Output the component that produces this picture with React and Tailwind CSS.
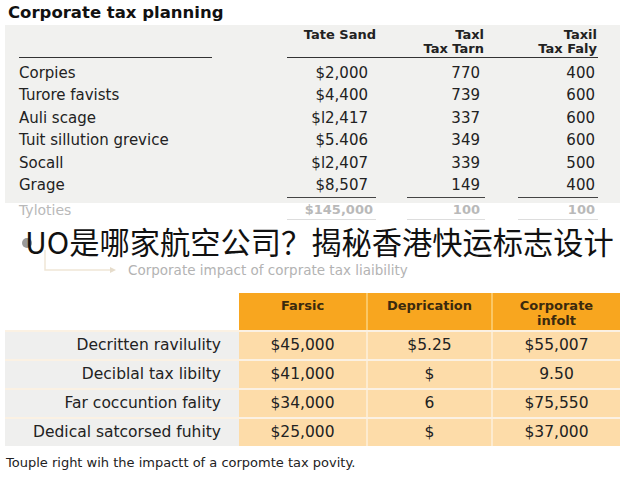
import React from 'react'

const ROWS = [
  ['Corpies', '$2,000', '770', '400'],
  ['Turore favists', '$4,400', '739', '600'],
  ['Auli scage', '$l2,417', '337', '600'],
  ['Tuit sillution grevice', '$5.406', '349', '600'],
  ['Socall', '$l2,407', '339', '500'],
  ['Grage', '$8,507', '149', '400'],
]

const IMPACT = [
  ['Decritten ravilulity', '$45,000', '$5.25', '$55,007'],
  ['Deciblal tax libilty', '$41,000', '$', '9.50'],
  ['Far coccuntion fality', '$34,000', '6', '$75,550'],
  ['Dedical satcorsed fuhity', '$25,000', '$', '$37,000'],
]

function NumCols({ a, b, c, className = '' }) {
  return (
    <div className={`flex w-[311px] ${className}`}>
      <div className="w-[89px] text-right pr-[8px]">{a}</div>
      <div className="w-[31px]" />
      <div className="w-[78px] text-right pr-[5px]">{b}</div>
      <div className="w-[33px]" />
      <div className="w-[80px] text-right pr-[3px]">{c}</div>
    </div>
  )
}

export default function App() {
  return (
    <div className="w-[640px] h-[480px] bg-white overflow-hidden font-['DejaVu_Sans',sans-serif] text-[#222]">
      {/* title */}
      <h1 className="pl-[8px] pt-[3px] text-[16.5px] leading-[20px] font-bold text-[#111]">Corporate tax planning</h1>

      {/* planning table */}
      <div className="mt-[2px] ml-[5px] w-[615px] bg-[#f1f1ef] pt-[3px] pb-[5px] pl-[14px]">
        <div className="flex items-end text-[13px] leading-[14px] font-bold">
          <div className="w-[193px] border-b-[1.5px] border-[#333]" />
          <div className="w-[75px]" />
          <div className="flex w-[311px] border-b-[1.5px] border-[#333] pb-[1px]">
            <div className="w-[89px] text-right pr-[0px]">Tate Sand</div>
            <div className="w-[31px]" />
            <div className="w-[78px] text-right pr-[1px]">
              <div>Taxl</div>
              <div>Tax Tarn</div>
            </div>
            <div className="w-[33px]" />
            <div className="w-[80px] text-right pr-[1px]">
              <div>Taxil</div>
              <div>Tax Faly</div>
            </div>
          </div>
        </div>
        <div className="mt-[4px] text-[15px] leading-[22.4px]">
          {ROWS.map(r => (
            <div key={r[0]} className="flex">
              <div className="w-[193px]">{r[0]}</div>
              <div className="w-[75px]" />
              <NumCols a={r[1]} b={r[2]} c={r[3]} />
            </div>
          ))}
        </div>
        <div className="flex mt-[1px]">
          <div className="w-[268px]" />
          <div className="flex w-[311px]">
            <div className="w-[89px] border-t-[1.5px] border-[#444]" />
            <div className="w-[31px]" />
            <div className="w-[78px] border-t-[1.5px] border-[#444]" />
            <div className="w-[33px]" />
            <div className="w-[80px] border-t-[1.5px] border-[#444]" />
          </div>
        </div>
      </div>

      {/* totals */}
      <div className="flex pl-[19px] text-[14px] leading-[14px] text-[#b9b9b9]">
        <div className="w-[193px]">Tyloties</div>
        <div className="w-[75px]" />
        <div className="flex w-[311px] font-bold text-[13px]">
          <div className="w-[89px] text-right pr-[3px] pb-[2px] border-b border-[#ddd]">$145,000</div>
          <div className="w-[31px]" />
          <div className="w-[78px] text-right pr-[5px] pb-[2px] border-b border-[#ddd]">100</div>
          <div className="w-[33px]" />
          <div className="w-[80px] text-right pr-[3px] pb-[2px] border-b border-[#ddd]">100</div>
        </div>
      </div>

      {/* headline */}
      <div className="relative h-[64px]">
        <span className="absolute left-[22px] top-[18px] w-[10px] h-[10px] rounded-full bg-[#9a9a9a]" />
        <svg className="absolute left-[40px] top-[30px]" width="80" height="24" viewBox="0 0 80 24">
          <path d="M5 0 V20 H74" fill="none" stroke="#efe6d6" strokeWidth="1.5" />
          <path d="M70 17 L76 20 L70 23 Z" fill="#e6dccb" />
        </svg>
        <div className="relative pl-[25px] pt-[4px] font-['Noto_Sans_CJK_SC',sans-serif] text-[30.25px] leading-[34px] text-[#111]">
          UO是哪家航空公司？揭秘香港快运标志设计
        </div>
        <div className="relative pl-[128px] mt-[4px] text-[13.5px] leading-[17px] text-[#b3b3b3]">
          Corporate impact of corprate tax liaibility
        </div>
      </div>

      {/* impact table */}
      <div className="mt-[9px] ml-[5px] w-[615px] text-[15.5px]">
        <div className="flex h-[37px]">
          <div className="w-[234px]" />
          <div className="flex flex-1 bg-[#f8a61f] text-[13px] leading-[15px] font-bold text-[#3b2a0e]">
            <div className="w-[129px] flex justify-center pt-[5px] border-r-2 border-[#fbc765]">Farsic</div>
            <div className="w-[125px] flex justify-center pt-[5px] border-r-2 border-[#fbc765]">Deprication</div>
            <div className="flex-1 text-center pt-[5px]">
              <div>Corporate</div>
              <div>infolt</div>
            </div>
          </div>
        </div>
        {IMPACT.map(r => (
          <div key={r[0]} className="flex h-[29px] items-stretch border-t-2 border-[#fbf1e3]">
            <div className="w-[234px] bg-[#efefee] text-right pr-[18px] leading-[27px] text-[#222]">{r[0]}</div>
            <div className="flex flex-1 bg-[#fddca9] leading-[27px] text-[#222]">
              <div className="w-[129px] text-center border-r-2 border-[#fdebcf]">{r[1]}</div>
              <div className="w-[125px] text-center border-r-2 border-[#fdebcf]">{r[2]}</div>
              <div className="flex-1 text-center">{r[3]}</div>
            </div>
          </div>
        ))}
      </div>

      <p className="pl-[6px] mt-[9px] text-[13px] leading-[16px] text-[#222]">
        Touple right wih the impactt of a corpomte tax povity.
      </p>
    </div>
  )
}
